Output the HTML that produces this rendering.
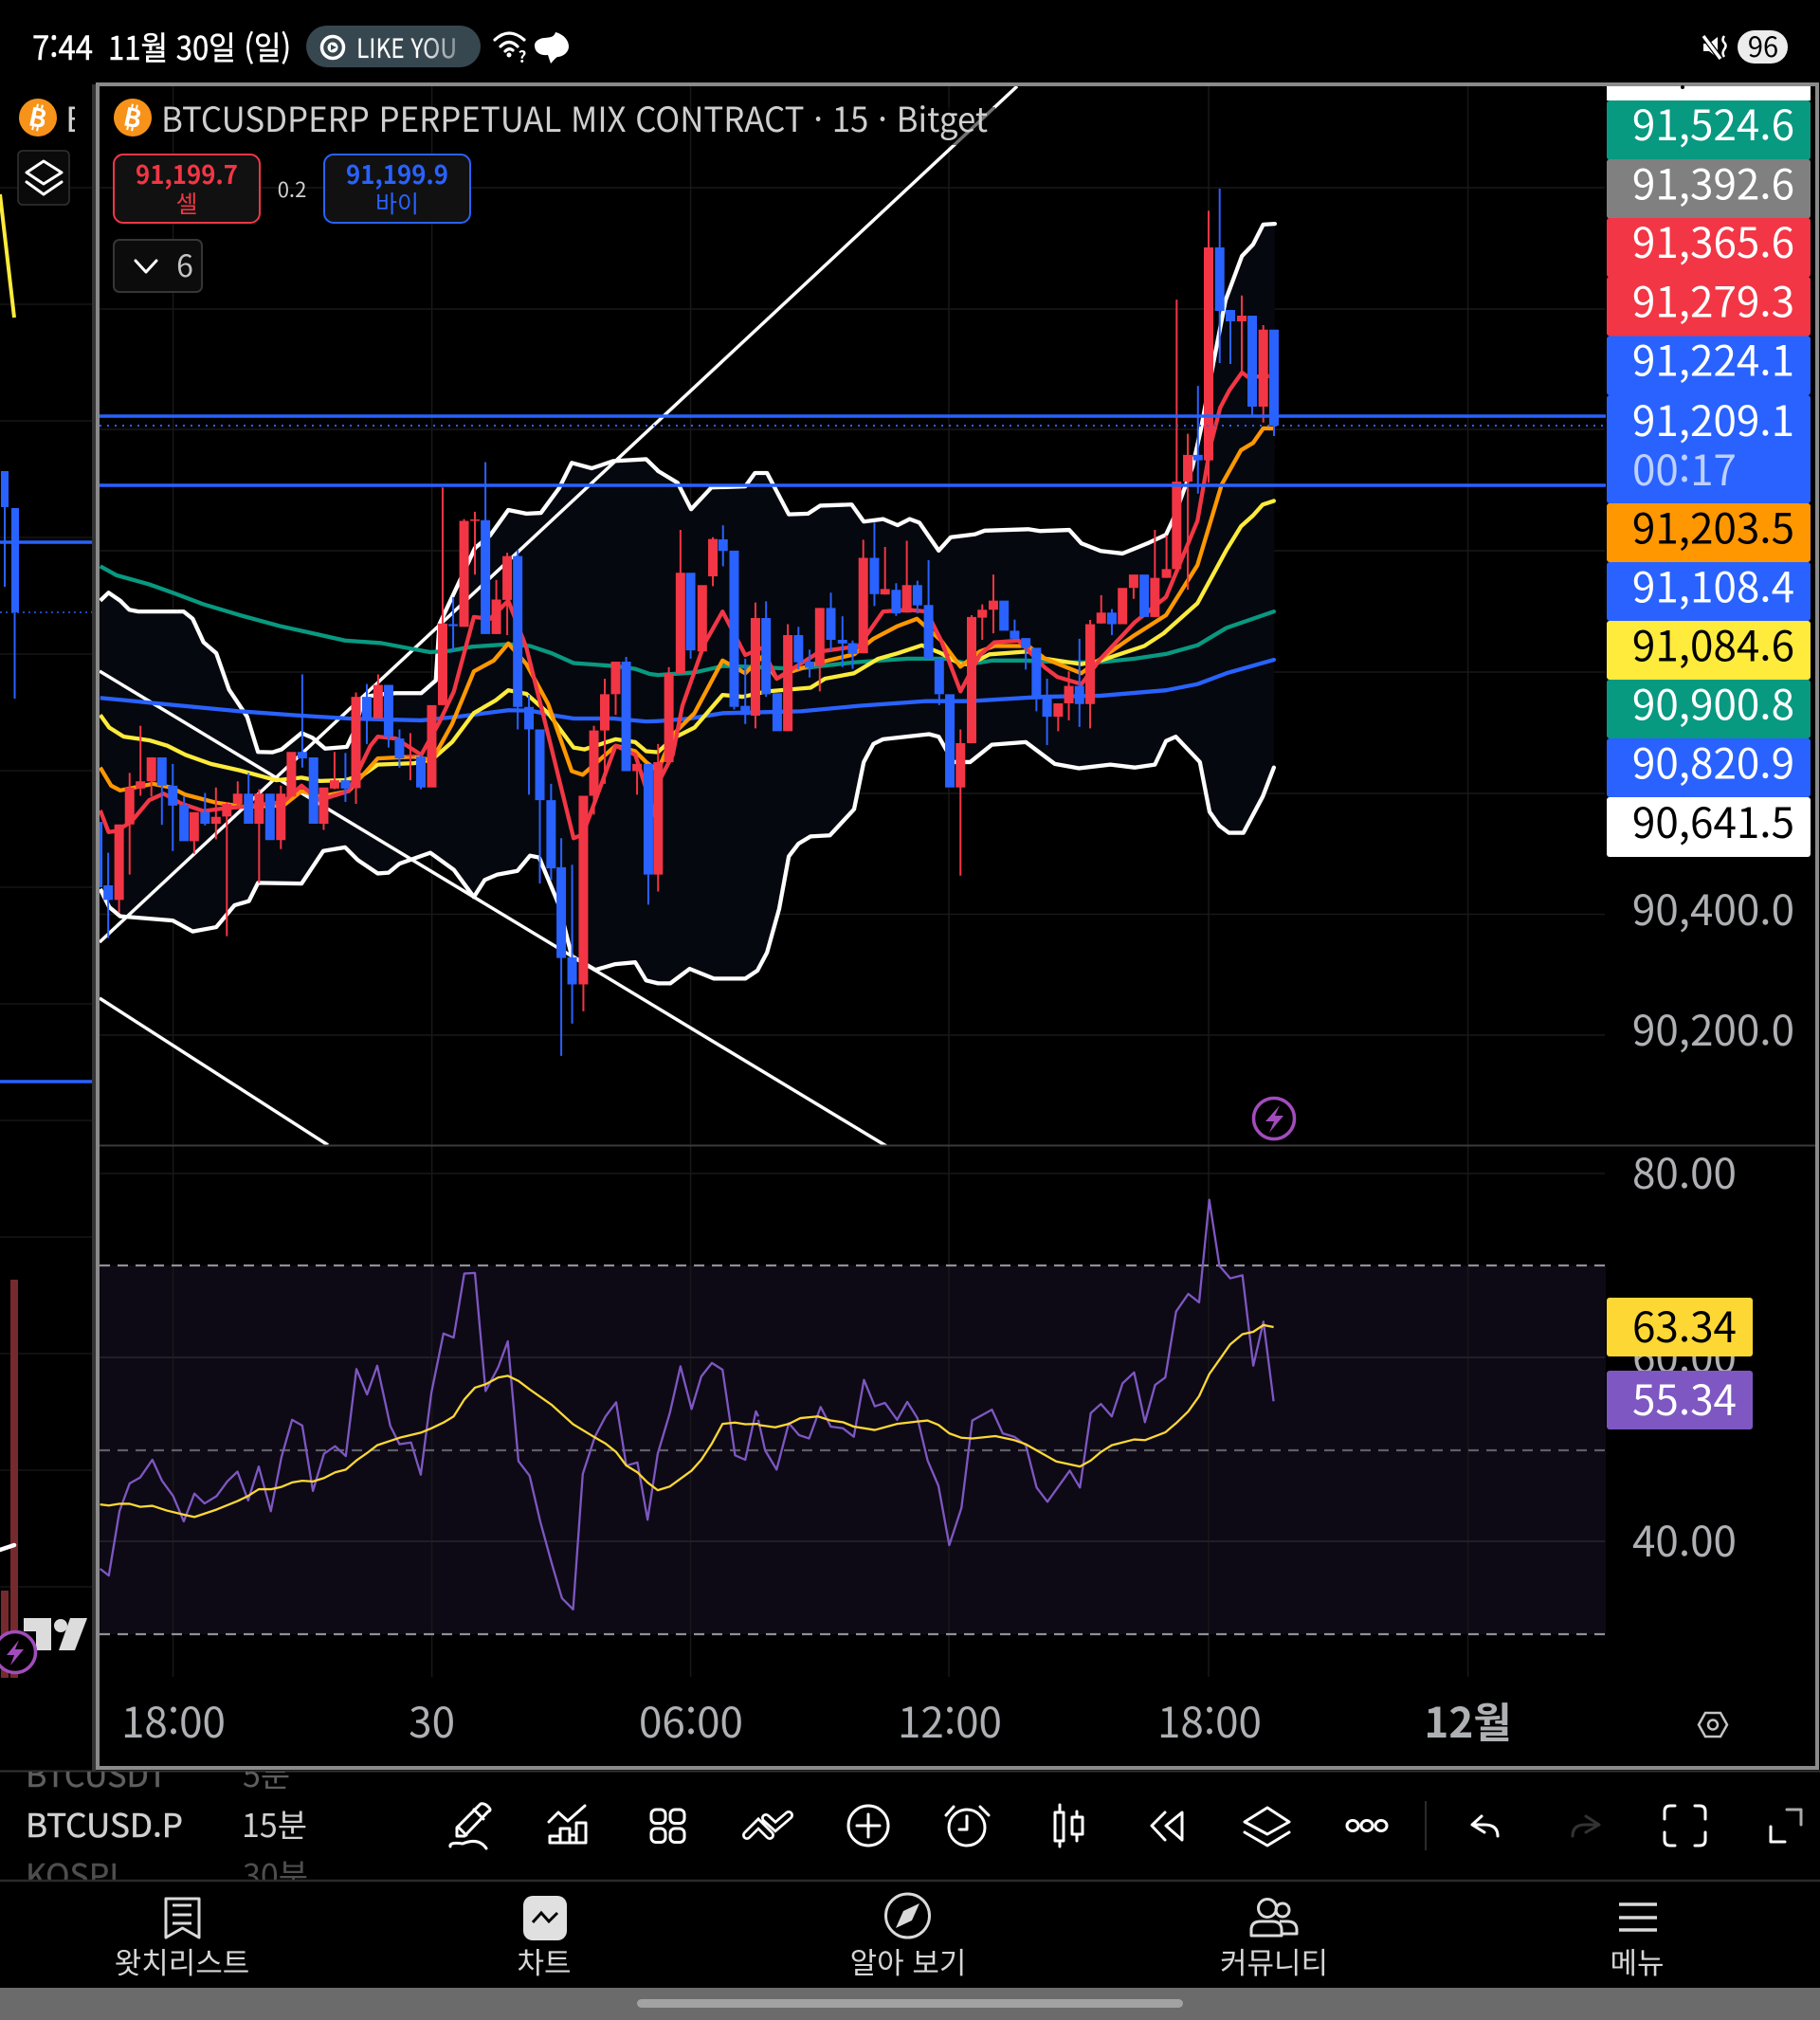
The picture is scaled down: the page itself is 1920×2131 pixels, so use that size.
<!DOCTYPE html>
<html lang="ko"><head><meta charset="utf-8"><title>BTCUSD</title>
<style>
html,body{margin:0;padding:0;background:#000;width:1920px;height:2131px;overflow:hidden}
svg{display:block;font-family:"Noto Sans CJK KR","Liberation Sans",sans-serif}
path,polyline,line,circle,rect,ellipse,polygon{vector-effect:non-scaling-stroke}
.l{font-size:44px;text-anchor:end}
.a{font-size:44px;fill:#aeb0b4}
.t{font-size:44px;fill:#aeb0b4;text-anchor:middle}
.n{font-size:31px;fill:#d6d6d6;text-anchor:middle}
.i{fill:none;stroke:#fff;stroke-width:3;stroke-linejoin:round;stroke-linecap:round}
.g{fill:none;stroke:#dadada;stroke-width:3;stroke-linejoin:round}
</style></head><body>
<svg width="1920" height="2131" viewBox="0 0 1920 2131" xmlns="http://www.w3.org/2000/svg">
<defs>
<clipPath id="main"><rect x="105" y="91" width="1589" height="1117"/></clipPath>
<clipPath id="e"><rect x="60" y="95" width="19" height="60"/></clipPath>
<clipPath id="rows"><rect x="0" y="1869" width="460" height="114"/></clipPath>
<linearGradient id="fade" gradientUnits="userSpaceOnUse" x1="440" y1="0" x2="484" y2="0"><stop offset="0" stop-color="#fff"/><stop offset="1" stop-color="#7e8a90"/></linearGradient>
</defs>
<rect width="1920" height="2131" fill="#000"/>

<!-- left mini pane -->
<g stroke="#151515" stroke-width="1.5"><path d="M0 198H97M0 321H97M0 444H97M0 567H97M0 690H97M0 813H97M0 936H97M0 1059H97M0 1182H97M0 1305H97M0 1428H97M0 1551H97M0 1674H97"/></g>
<path d="M0 205L15 335" stroke="#fdeb3b" stroke-width="4" fill="none"/>
<path d="M5 535V619" stroke="#2962ff" stroke-width="2"/><rect x="1" y="497" width="8" height="38" fill="#2962ff"/>
<path d="M15.500 646V737" stroke="#2962ff" stroke-width="2"/><rect x="12" y="536" width="8" height="110" fill="#2962ff"/>
<path d="M0 572H97M0 1141H97" stroke="#2962ff" stroke-width="3.500"/>
<path d="M0 646H97" stroke="#2962ff" stroke-width="1.500" stroke-dasharray="2 4"/>
<rect x="11" y="1350" width="8" height="420" fill="#762a2e"/><rect x="1" y="1678" width="8" height="92" fill="#762a2e"/>
<path d="M0 1635L15 1630" stroke="#fff" stroke-width="4.500" stroke-linecap="round"/>
<g fill="#dcdcdc"><path d="M25 1707H54V1741H38V1721H25Z"/><circle cx="64" cy="1715" r="7"/><path d="M74 1707H92L79 1741H62Z"/></g>
<circle cx="16" cy="1743" r="21.500" fill="#000" stroke="#a24cbc" stroke-width="3.500"/>
<path d="M20 1730L7 1746H15L11 1757L25 1740H16Z" fill="#a24cbc"/>
<circle cx="40" cy="124" r="20" fill="#f7931a"/>
<g transform="rotate(12 40 124)"><text x="40" y="134" font-size="27" font-weight="700" fill="#fff" text-anchor="middle">B</text><path d="M37 110V114M42 110V114M37 134V138M42 134V138" stroke="#fff" stroke-width="2"/></g>
<text x="69" y="139" font-size="36" fill="#d0d0d0" clip-path="url(#e)">BTC</text>
<rect x="19" y="159" width="54" height="57" rx="5" fill="#0a0a0a" stroke="#333" stroke-width="1.500"/>
<path class="i" d="M28 182L46 170L65 182L46 194ZM28 192L46 205L65 192" stroke="#e2e2e2"/>

<!-- frame -->
<rect x="103" y="89" width="1814" height="1776" fill="#000" stroke="#8a8a8a" stroke-width="4"/>
<rect x="97" y="89" width="4" height="1779" fill="#333"/>
<path d="M0 1868.500H1920" stroke="#333" stroke-width="2"/>

<!-- RSI band + grids -->
<rect x="105" y="1335" width="1589" height="389" fill="#0d0a15"/>
<g stroke="#181818" stroke-width="1.500" fill="none"><path d="M105 198H1693M105 326H1693M105 453H1693M105 581H1693M105 709H1693M105 837H1693M105 964.500H1693M105 1092H1693M105 1238H1693M182.600 91V1769M455.600 91V1769M728.600 91V1769M1001 91V1769M1275 91V1769M1548.600 91V1769"/></g>
<path d="M105 1432H1693M105 1626H1693" stroke="#211e29" stroke-width="2"/>

<g clip-path="url(#main)">
<!-- Bollinger fill -->
<g fill="#05080e">
<polygon transform="translate(100,450) scale(.38265)" points="15,480 38,458 70,480 95,505 120,510 245,510 270,530 300,595 335,625 370,725 420,800 450,897 490,898 515,890 570,845 600,858 635,888 695,883 720,830 740,745 800,737 830,735 900,735 940,700 950,545 1018,400 1048,335 1090,300 1140,230 1190,240 1230,238 1280,170 1315,100 1370,115 1430,95 1520,90 1553,122 1553,1535 1520,1527 1490,1477 1435,1482 1380,1498 1315,1460 1280,1320 1225,1188 1200,1183 1165,1225 1110,1235 1075,1250 1045,1297 990,1222 925,1175 840,1205 810,1230 780,1232 725,1195 690,1160 630,1170 570,1260 450,1258 425,1308 385,1320 335,1380 270,1392 215,1362 70,1350 40,1325 15,1275"/>
<polygon transform="translate(600,450) scale(.5102,.38265)" points="184,122 225,155 253,228 295,168 365,165 385,128 410,128 455,242 495,240 520,218 585,215 610,262 650,255 680,272 705,255 725,265 765,342 790,305 840,297 860,287 950,283 975,288 1035,285 1060,322 1100,343 1145,350 1200,320 1235,298 1250,255 1290,110 1307,8 1334,-183 1358,-348 1392,-470 1415,-502 1436,-557 1460,-559 1458,940 1435,1020 1395,1120 1365,1120 1345,1100 1325,1062 1305,925 1255,855 1235,867 1212,932 1170,940 1120,932 1055,942 1005,930 945,870 875,877 830,925 795,925 765,855 745,848 650,862 630,875 610,925 590,1055 540,1127 500,1130 475,1150 455,1185 435,1330 410,1450 390,1500 365,1522 300,1522 250,1495 210,1535 184,1535"/>
</g>
<!-- trend lines -->
<g stroke="#fff" stroke-width="3.500" fill="none"><path d="M105 994L1073 91"/><path d="M105 708L945 1215"/><path d="M105 1053L346 1208"/></g>
<rect x="900" y="113" width="150" height="40" fill="#000" opacity=".55"/>

<!-- indicators left -->
<g transform="translate(100,450) scale(.38265)" fill="none" stroke-width="4.300" stroke-linejoin="round">
<polyline stroke="#fff" points="15,480 38,458 70,480 95,505 120,510 245,510 270,530 300,595 335,625 370,725 420,800 450,897 490,898 515,890 570,845 600,858 635,888 695,883 720,830 740,745 800,737 830,735 900,735 940,700 950,545 1018,400 1048,335 1090,300 1140,230 1190,240 1230,238 1280,170 1315,100 1370,115 1430,95 1520,90 1553,122"/>
<polyline stroke="#fff" points="15,1275 40,1325 70,1350 215,1362 270,1392 335,1380 385,1320 425,1308 450,1258 570,1260 630,1170 690,1160 725,1195 780,1232 810,1230 840,1205 925,1175 990,1222 1045,1297 1075,1250 1110,1235 1165,1225 1200,1183 1225,1188 1280,1320 1315,1460 1380,1498 1435,1482 1490,1477 1520,1527 1553,1535"/>
<polyline stroke="#089981" points="15,385 60,410 150,435 220,460 300,490 400,520 510,550 610,572 690,590 790,597 870,612 925,622 980,618 1040,607 1140,600 1200,605 1260,625 1320,652 1430,660 1490,668 1530,682 1553,685"/>
<polyline stroke="#2962ff" points="15,748 160,762 400,785 570,797 700,805 900,810 1000,800 1140,782 1200,783 1270,797 1320,805 1430,805 1520,813 1553,812"/>
<polyline stroke="#fdeb3b" points="15,795 40,830 80,855 150,865 200,880 250,905 320,930 400,948 500,975 570,968 620,977 690,975 740,960 780,932 880,928 930,918 985,870 1045,790 1105,755 1140,727 1190,737 1250,790 1320,885 1350,890 1436,862 1490,870 1520,895 1553,898"/>
<polyline stroke="#ff9800" points="15,940 45,990 70,1003 160,985 210,995 250,1015 335,1037 410,1048 520,1045 570,1005 620,1020 700,1005 780,915 880,910 930,920 985,820 1045,675 1100,645 1140,598 1190,655 1250,765 1315,950 1345,960 1436,880 1490,895 1520,925 1553,950"/>
<polyline stroke="#f23645" points="15,1058 38,1118 60,1115 100,1090 150,1030 190,1012 240,1040 300,1060 360,1052 410,1048 520,1035 570,990 620,1030 700,1005 760,880 780,855 830,860 900,905 950,815 990,730 1045,525 1090,530 1140,480 1190,610 1250,850 1320,1135 1345,1125 1436,880 1490,905 1553,1100"/>
</g>
<!-- indicators right -->
<g transform="translate(600,450) scale(.5102,.38265)" fill="none" stroke-width="4.300" stroke-linejoin="round">
<polyline stroke="#fff" points="184,122 225,155 253,228 295,168 365,165 385,128 410,128 455,242 495,240 520,218 585,215 610,262 650,255 680,272 705,255 725,265 765,342 790,305 840,297 860,287 950,283 975,288 1035,285 1060,322 1100,343 1145,350 1200,320 1235,298 1250,255 1290,110 1307,8 1334,-183 1358,-348 1392,-470 1415,-502 1436,-557 1460,-559" stroke-linecap="round"/>
<polyline stroke="#fff" stroke-linecap="round" points="184,1535 210,1535 250,1495 300,1522 365,1522 390,1500 410,1450 435,1330 455,1185 475,1150 500,1130 540,1127 590,1055 610,925 630,875 650,862 745,848 765,855 795,925 830,925 875,877 945,870 1005,930 1055,942 1120,932 1170,940 1212,932 1235,867 1255,855 1305,925 1325,1062 1345,1100 1365,1120 1395,1120 1435,1020 1458,940"/>
<polyline stroke="#089981" stroke-linecap="round" points="184,685 260,678 320,660 385,663 470,668 590,650 700,640 780,640 830,655 875,645 945,645 1030,650 1095,650 1170,640 1235,627 1300,603 1360,555 1458,510"/>
<polyline stroke="#2962ff" stroke-linecap="round" points="184,812 250,805 320,790 480,785 600,770 740,757 830,757 980,745 1100,742 1235,727 1300,710 1360,680 1458,643"/>
<polyline stroke="#fdeb3b" stroke-linecap="round" points="184,898 215,860 260,830 318,740 360,745 410,730 500,720 530,695 590,680 640,640 680,625 730,603 770,625 810,655 830,655 870,628 950,620 985,640 1060,655 1100,645 1190,605 1230,570 1300,487 1360,340 1390,275 1415,245 1435,215 1458,205"/>
<polyline stroke="#ff9800" stroke-linecap="round" points="184,950 215,850 260,790 318,645 365,680 400,635 430,695 450,680 520,650 590,628 630,585 680,550 720,530 770,590 810,662 850,620 880,605 950,605 985,640 1060,680 1100,640 1170,575 1235,520 1300,382 1350,160 1390,65 1415,45 1436,5 1456,5"/>
<polyline stroke="#f23645" points="184,985 215,905 235,770 280,600 318,510 365,630 400,610 430,695 520,620 600,605 650,510 700,505 740,510 770,590 810,730 850,630 880,595 930,590 985,665 1010,690 1060,710 1100,640 1170,540 1235,470 1300,260 1327,52 1347,-52 1366,-100 1392,-149 1405,-136 1436,-139 1448,-139"/>
</g>

<!-- candles left -->
<g transform="translate(100,450) scale(.38265)" fill="none">
<path stroke="#2962ff" stroke-width="2" d="M37 1175V1410M185 990V1098M215 930V1170M246 1020V1143M304 1010V1100M424 955V1095M572 683V940M691 900V1035M750 710V875M810 855V885M840 835V940M899 905V1000M988 470V622M1077 98V572M1166 340V835M1197 740V1015M1227 1030V1260M1258 985V1250M1286 1135V1735M1316 1208V1646M1465 635V950M1526 1235V1318"/>
<path stroke="#f23645" stroke-width="2" d="M67 1305V1340M96 955V1235M126 825V1018M156 912V1020M274 1143V1178M334 995V1138M364 1035V1405M394 978V1050M453 1000V1258M513 990V1165M631 1000V1112M661 897V1000M720 733V1040M781 683V805M870 845V975M959 168V768M1018 255V552M1048 235V408M1107 423V572M1137 348V575M1347 1538V1612M1376 825V1070M1406 695V985M1436 738V795M1495 950V1015M1553 875V1282"/>
<path stroke="#2962ff" stroke-width="10" d="M8 1090V1270M37 1265V1305M185 912V990M215 990V1045M246 1043V1143M304 1063V1095M424 1012V1095M483 1012V1140M572 897V915M603 912V1095M691 975V998M750 745V805M810 712V855M840 860V915M899 910V995M988 545V550M1077 258V572M1166 357V773M1197 773V835M1227 835V1030M1258 1030V1218M1286 1215V1465M1316 1463V1538M1465 648V950M1526 930V1235"/>
<path stroke="#f23645" stroke-width="10" d="M67 1097V1305M96 995V1097M126 978V998M156 912V978M274 1063V1143M334 1076V1095M364 1040V1075M394 1012V1040M453 1012V1095M513 1012V1140M542 897V1020M631 995V1095M661 975V998M720 745V997M781 712V805M870 905V909M929 768V995M959 543V768M1018 260V552M1048 256V260M1107 477V572M1137 357V478M1347 1018V1538M1376 838V1018M1406 738V838M1436 648V738M1495 930V950M1553 925V1235"/>
</g>
<!-- candles right -->
<g transform="translate(600,450) scale(.5102,.38265)" fill="none">
<path stroke="#2962ff" stroke-width="2" d="M252 617V640M319 272V385M342 773V780M365 640V820M408 482V745M475 552V670M498 615V692M542 458V618M566 523V663M587 590V668M632 265V495M677 432V522M721 425V515M744 368V640M766 738V768M922 532V585M945 610V670M967 752V785M989 695V878M1056 585V828M1123 503V575M1301 -112V185"/>
<path stroke="#f23645" stroke-width="2" d="M207 663V930M231 285V680M298 305V440M386 485V832M453 545V840M519 500V730M609 312V625M654 332V463M699 315V513M810 835V1238M833 520V873M855 490V588M878 408V570M1012 800V840M1034 675V810M1078 533V832M1101 465V543M1168 445V475M1212 285V525M1236 300V417M1257 -350V395M1280 20V450M1323 -595V155"/>
<path stroke="#2962ff" stroke-width="10" d="M252 403V617M319 311V343M342 342V773M365 770V795M408 528V738M431 735V840M475 575V650M498 648V665M542 500V588M566 588V598M587 597V627M632 362V462M677 450V515M721 437V493M744 492V640M766 640V738M788 738V995M900 480V563M922 563V585M945 583V610M967 610V752M989 745V800M1056 715V765M1123 513V545M1190 408V525M1301 78V93"/>
<path stroke="#f23645" stroke-width="10" d="M207 680V925M231 403V680M276 437V620M298 310V413M386 528V797M453 575V840M519 500V660M609 362V625M654 448V463M699 437V513M810 873V995M833 525V873M855 505V527M878 480V505M1012 763V800M1034 715V763M1078 545V765M1101 513V543M1145 445V545M1168 408V445M1212 417V525M1236 393V417M1257 152V393M1280 78V152M1323 -494V93"/>
</g>
<!-- candles top right (real coords) -->
<g fill="none">
<path stroke="#2962ff" stroke-width="2" d="M1286.700 199V383M1298 339V384M1321 429V438M1344 449V460"/>
<path stroke="#f23645" stroke-width="2" d="M1310 311.700V393M1332.700 343V445.700"/>
<path stroke="#2962ff" stroke-width="10" d="M1286.700 261V328M1298 327V339M1321 333V429M1344 347.700V449"/>
<path stroke="#f23645" stroke-width="10" d="M1310 333V339M1332.700 347.700V429"/>
</g>
<!-- horizontal lines -->
<path d="M105 439H1694M105 512H1694" stroke="#2962ff" stroke-width="3.500"/>
<path d="M105 449H1694" stroke="#2962ff" stroke-width="2" stroke-dasharray="2 6"/>
<!-- bolt -->
<circle cx="1344" cy="1180" r="21.500" fill="#000" stroke="#a24cbc" stroke-width="3.500"/>
<path d="M1350 1166L1335 1183H1344L1339 1195L1354 1177H1345Z" fill="#a24cbc"/>
</g>
<path d="M105 1208.500H1915" stroke="#3a3a3a" stroke-width="2"/>

<!-- legend -->
<circle cx="140" cy="124" r="20" fill="#f7931a"/>
<g transform="rotate(12 140 124)"><text x="140" y="134" font-size="27" font-weight="700" fill="#fff" text-anchor="middle">B</text><path d="M137 110V114M142 110V114M137 134V138M142 134V138" stroke="#fff" stroke-width="2"/></g>
<text x="170" y="139" font-size="36" fill="#cfcfcf" textLength="872" lengthAdjust="spacingAndGlyphs">BTCUSDPERP PERPETUAL MIX CONTRACT · 15 · Bitget</text>
<rect x="120" y="163" width="154" height="72" rx="10" fill="#111" stroke="#f23645" stroke-width="2"/>
<text x="197" y="194" font-size="27" font-weight="700" fill="#f23645" text-anchor="middle" textLength="108" lengthAdjust="spacingAndGlyphs">91,199.7</text>
<text x="197" y="224" font-size="25" fill="#f23645" text-anchor="middle">셀</text>
<text x="308" y="208" font-size="22" fill="#d0d0d0" text-anchor="middle">0.2</text>
<rect x="342" y="163" width="154" height="72" rx="10" fill="#111" stroke="#2962ff" stroke-width="2"/>
<text x="419" y="194" font-size="27" font-weight="700" fill="#2962ff" text-anchor="middle" textLength="108" lengthAdjust="spacingAndGlyphs">91,199.9</text>
<text x="419" y="224" font-size="25" fill="#2962ff" text-anchor="middle">바이</text>
<rect x="120" y="253" width="93" height="55" rx="6" fill="#0c0c0c" stroke="#363636" stroke-width="2"/>
<path class="i" d="M143 275L154 287L165 275" stroke="#ddd"/>
<text x="195" y="292" font-size="32" fill="#c4c4c4" text-anchor="middle">6</text>

<!-- price labels -->
<g>
<rect x="1695" y="91" width="215" height="15" fill="#fff"/><circle cx="1775" cy="92" r="2" fill="#000"/>
<rect x="1695" y="106" width="215" height="62.500" rx="3" fill="#089981"/>
<rect x="1695" y="168" width="215" height="62.500" rx="3" fill="#808080"/>
<rect x="1695" y="230" width="215" height="62.500" rx="3" fill="#f23645"/>
<rect x="1695" y="292" width="215" height="62.500" rx="3" fill="#f23645"/>
<rect x="1695" y="354.500" width="215" height="62.500" rx="3" fill="#2962ff"/>
<rect x="1695" y="417" width="215" height="114" rx="3" fill="#2962ff"/>
<rect x="1695" y="531" width="215" height="62" rx="3" fill="#ff9800"/>
<rect x="1695" y="593" width="215" height="62" rx="3" fill="#2962ff"/>
<rect x="1695" y="655" width="215" height="62" rx="3" fill="#ffeb3b"/>
<rect x="1695" y="717" width="215" height="62" rx="3" fill="#089981"/>
<rect x="1695" y="779" width="215" height="62" rx="3" fill="#2962ff"/>
<rect x="1695" y="841" width="215" height="63" rx="3" fill="#fff"/>
<text class="l" x="1893" y="148" fill="#fff">91,524.6</text>
<text class="l" x="1893" y="210.500" fill="#fff">91,392.6</text>
<text class="l" x="1893" y="272" fill="#fff">91,365.6</text>
<text class="l" x="1893" y="334.500" fill="#fff">91,279.3</text>
<text class="l" x="1893" y="396.500" fill="#fff">91,224.1</text>
<text class="l" x="1893" y="460" fill="#fff">91,209.1</text>
<text x="1722" y="512" font-size="44" fill="#bdd0ff">00:17</text>
<text class="l" x="1893" y="573.500" fill="#000">91,203.5</text>
<text class="l" x="1893" y="635.500" fill="#fff">91,108.4</text>
<text class="l" x="1893" y="697.500" fill="#000">91,084.6</text>
<text class="l" x="1893" y="759.500" fill="#fff">90,900.8</text>
<text class="l" x="1893" y="821.500" fill="#fff">90,820.9</text>
<text class="l" x="1893" y="884" fill="#000">90,641.5</text>
<text class="l" x="1893" y="976" fill="#aeb0b4">90,400.0</text>
<text class="l" x="1893" y="1103" fill="#aeb0b4">90,200.0</text>
<text class="a" x="1722" y="1254">80.00</text>
<text class="a" x="1722" y="1448">60.00</text>
<text class="a" x="1722" y="1642">40.00</text>
<rect x="1695" y="1369" width="154" height="62" rx="3" fill="#fdd835"/>
<rect x="1695" y="1446" width="154" height="62" rx="3" fill="#7e57c2"/>
<text x="1722" y="1416" font-size="44" fill="#000">63.34</text>
<text x="1722" y="1493" font-size="44" fill="#fff">55.34</text>
</g>

<!-- RSI -->
<g fill="none" stroke-width="2.300">
<path d="M105 1335H1694M105 1724H1694" stroke="#8f8f95" stroke-dasharray="11 8"/>
<path d="M105 1530H1694" stroke="#5f5d66" stroke-dasharray="11 8"/>
<polyline transform="translate(0,1230) scale(.5102,.35714)" stroke="#7e57c2" stroke-linejoin="round" points="207,1190 225,1210 247,1020 268,938 290,920 315,868 335,930 358,975 380,1050 402,968 423,997 448,975 470,932 491,903 513,988 535,888 560,1020 582,860 604,750 625,767 647,960 670,850 693,828 715,857 737,600 759,675 780,590 807,768 826,822 850,817 870,912 892,670 917,495 938,507 960,318 982,316 1004,665 1030,595 1050,518 1072,872 1095,915 1117,1050 1140,1170 1162,1277 1185,1310 1205,910 1230,800 1252,740 1274,698 1295,885 1318,876 1339,1045 1360,850 1385,730 1407,592 1430,718 1450,622 1472,582 1494,602 1520,855 1541,868 1563,725 1568,740"/>
<polyline transform="translate(800,1230) scale(.71429,.35714)" stroke="#7e57c2" stroke-linejoin="round" points="0,750 10,840 27,897 45,760 60,795 75,805 92,712 107,770 125,775 141,800 156,632 172,710 187,700 205,750 220,697 235,745 250,870 266,945 282,1120 300,1010 316,752 345,720 361,790 378,800 395,825 411,950 427,992 460,900 475,950 491,730 506,703 522,740 538,642 555,610 571,757 586,647 601,625 617,430 635,378 651,403 666,100 681,295 697,332 715,323 731,590 746,460 761,695"/>
<polyline transform="translate(0,1230) scale(.5102,.35714)" stroke="#fdd835" stroke-linejoin="round" points="207,1000 225,1003 247,998 268,998 290,1007 315,1004 345,1018 380,1030 402,1037 448,1015 491,990 513,975 535,955 560,955 582,948 604,935 625,930 647,932 670,922 693,905 715,897 737,870 759,848 780,825 826,803 870,788 892,775 917,758 938,740 960,690 982,655 1004,645 1030,625 1050,620 1072,635 1095,660 1140,705 1185,763 1230,802 1252,820 1274,845 1295,885 1318,905 1339,935 1360,958 1385,947 1430,900 1450,868 1472,820 1494,762 1520,758 1541,763 1568,762"/>
<polyline transform="translate(800,1230) scale(.71429,.35714)" stroke="#fdd835" stroke-linejoin="round" points="0,765 25,772 45,762 62,745 88,740 107,752 125,757 141,770 172,780 205,762 235,755 250,752 266,765 282,790 300,803 316,805 350,798 378,810 395,822 440,873 475,888 491,870 506,845 522,825 555,808 571,810 601,787 617,760 635,725 651,680 666,615 697,527 715,497 731,490 746,470 761,476"/>
</g>

<!-- time axis -->
<text class="t" x="183" y="1833">18:00</text>
<text class="t" x="455.600" y="1833">30</text>
<text class="t" x="729" y="1833">06:00</text>
<text class="t" x="1002" y="1833">12:00</text>
<text class="t" x="1276" y="1833">18:00</text>
<text class="t" x="1548.600" y="1833" font-weight="700">12월</text>
<path d="M1792 1819.500L1799 1807H1815L1822 1819.500L1815 1832H1799Z" fill="none" stroke="#c4c4c4" stroke-width="2.500"/><circle cx="1807" cy="1819.500" r="5" fill="none" stroke="#c4c4c4" stroke-width="2.500"/>

<!-- status bar -->
<text x="34" y="63" font-size="35" fill="#fff" stroke="#fff" stroke-width=".5" textLength="64" lengthAdjust="spacingAndGlyphs">7:44</text>
<text x="114" y="63" font-size="34" fill="#fff" stroke="#fff" stroke-width=".5" textLength="193" lengthAdjust="spacingAndGlyphs">11월 30일 (일)</text>
<rect x="323" y="27" width="184" height="44" rx="22" fill="#37474f"/>
<circle cx="351" cy="50" r="11.500" fill="none" stroke="#fff" stroke-width="3.500"/><circle cx="351" cy="50" r="5.500" fill="#fff"/><path d="M349 47L355 50L349 53Z" fill="#37474f"/>
<text x="376" y="61" font-size="28" fill="url(#fade)" stroke="#fff" stroke-opacity=".3" stroke-width=".4" textLength="106" lengthAdjust="spacingAndGlyphs">LIKE YOU</text>
<g fill="none" stroke="#fff" stroke-width="3.200" stroke-linecap="round"><path d="M522 42Q537 28 553 42"/><path d="M528 49Q537 40 546 49"/><path d="M533 54Q537 50 541 53"/></g>
<circle cx="537" cy="58" r="2.500" fill="#fff"/><text x="551" y="66" font-size="17" font-weight="700" fill="#fff" text-anchor="middle">?</text>
<path d="M586 34C594 36 600 42 600 49C600 55 594 60 588 60C585 62 583 65 581 67C580 64 579 61 578 58C570 59 564 55 564 48C564 43 570 40 575 40C580 39 584 40 586 34Z" fill="#fff"/>
<path d="M1797 46H1803L1812 39V61L1803 54H1797Z" fill="#fff"/><path d="M1797 38L1815 62" stroke="#000" stroke-width="6"/><path d="M1797 38L1815 62" stroke="#fff" stroke-width="3.500"/>
<path d="M1819 38Q1816 42 1819 45T1819 52T1819 60" fill="none" stroke="#fff" stroke-width="2.500"/>
<rect x="1833" y="32" width="53" height="35" rx="17.500" fill="#ececec"/>
<text x="1860" y="60" font-size="29" fill="#000" text-anchor="middle">96</text>

<!-- watchlist rows -->
<g clip-path="url(#rows)" font-size="34">
<text x="27" y="1885" fill="#5e5e5e" stroke="#5e5e5e" stroke-width=".4">BTCUSDT</text><text x="256" y="1885" fill="#5e5e5e">5분</text>
<text x="27" y="1991" fill="#4e4e4e" stroke="#4e4e4e" stroke-width=".4">KOSPI</text><text x="256" y="1991" fill="#4e4e4e">30분</text>
</g>
<text x="27" y="1938" font-size="34" fill="#d0d0d0" stroke="#d0d0d0" stroke-width=".5" textLength="166" lengthAdjust="spacingAndGlyphs">BTCUSD.P</text>
<text x="255" y="1938" font-size="34" fill="#d0d0d0">15분</text>

<!-- toolbar icons -->
<g class="i">
<path d="M507 1903Q511 1902 515 1906T515 1911L490 1937H482V1928Z"/><path d="M483 1927L492 1936M500 1909L510 1919"/><path d="M475 1948Q474 1943 488 1945Q505 1938 513 1950"/>
<path d="M579 1922L589 1912L599 1921L617 1905"/><path d="M580 1944V1937H591V1929H601V1936H608V1923H618V1944ZM591 1937V1944M601 1936V1944M608 1936V1944"/>
<rect x="687" y="1909" width="15" height="14.500" rx="5"/><rect x="707" y="1909" width="15" height="14.500" rx="5"/><rect x="687" y="1929" width="15" height="14.500" rx="5"/><rect x="707" y="1929" width="15" height="14.500" rx="5"/>
<circle cx="916" cy="1926" r="21"/><path d="M904 1926H928M916 1914V1938"/>
<circle cx="1020" cy="1928" r="19"/><path d="M1020 1916V1930H1012M998 1915L1006 1906M1034 1906L1043 1915"/>
<path d="M1118 1904V1912M1118 1942V1948M1136 1911V1917M1136 1935V1942"/><rect x="1113" y="1912" width="9" height="30"/><rect x="1131" y="1917" width="11" height="18"/>
<path d="M1229 1912L1215 1926L1229 1941M1247 1912L1230 1926L1247 1941Z"/>
<path d="M1313 1922L1337 1907L1360 1922L1337 1935ZM1313 1933L1337 1947L1360 1933"/>
<ellipse cx="1427" cy="1926" rx="6" ry="5.500"/><ellipse cx="1442" cy="1926" rx="6" ry="5.500"/><ellipse cx="1457" cy="1926" rx="6" ry="5.500"/>
<path d="M1563 1916L1553 1925L1566 1933M1553 1925H1566Q1580 1925 1580 1937"/>
<path d="M1673 1916L1687 1925L1673 1933M1687 1925H1672Q1659 1925 1659 1937" stroke="#333"/>
<path d="M1756 1919V1911Q1756 1905 1762 1905H1767M1788 1905H1793Q1799 1905 1799 1911V1919M1799 1933V1941Q1799 1947 1793 1947H1788M1767 1947H1762Q1756 1947 1756 1941V1933"/>
<path d="M1885 1909H1900V1925" stroke="#aaa"/><path d="M1868 1927V1943H1883"/>
</g>
<!-- double-chevron toolbar icon: white band with hollow core -->
<g fill="none" stroke-linecap="round" stroke-linejoin="miter">
<path d="M788 1936L800 1924L812 1936M808 1918L818 1927L832 1915" stroke="#fff" stroke-width="10"/>
<path d="M788 1936L800 1924L812 1936M808 1918L818 1927L832 1915" stroke="#000" stroke-width="4.500"/>
</g>
<path d="M1504 1900V1952" stroke="#2b2b2b" stroke-width="2"/>

<!-- bottom nav -->
<path d="M0 1984H1920" stroke="#2a2a2a" stroke-width="2.500"/>
<g class="g">
<path d="M175 2003H210V2044L192.500 2034L175 2044Z"/><path d="M182 2010H202M182 2020H202M182 2029H202"/>
<circle cx="957.500" cy="2021" r="23"/>
<circle cx="1337" cy="2013" r="9.500"/><circle cx="1353" cy="2015" r="7"/><path d="M1320 2042V2036Q1320 2027 1330 2027H1342Q1352 2027 1352 2036V2042Z"/><path d="M1350 2027H1358Q1368 2027 1368 2036V2040H1352"/>
</g>
<path d="M970 2008L962 2026L945 2034L953 2016Z" fill="#dadada"/>
<rect x="552" y="2000" width="46" height="47" rx="10" fill="#e0e0e0"/>
<path d="M562 2028L571 2018L579 2027L588 2018" fill="none" stroke="#000" stroke-width="3"/>
<path d="M1708 2009H1748M1708 2023H1748M1708 2036H1748" stroke="#dadada" stroke-width="3.500"/>
<text class="n" x="192" y="2082">왓치리스트</text>
<text class="n" x="574" y="2082">차트</text>
<text class="n" x="958" y="2082">알아 보기</text>
<text class="n" x="1344" y="2082">커뮤니티</text>
<text class="n" x="1727" y="2082">메뉴</text>
<rect x="0" y="2097" width="1920" height="34" fill="#6b6b6b"/>
<rect x="672" y="2109" width="576" height="9" rx="4.500" fill="#a2a2a2"/>
</svg>
</body></html>
